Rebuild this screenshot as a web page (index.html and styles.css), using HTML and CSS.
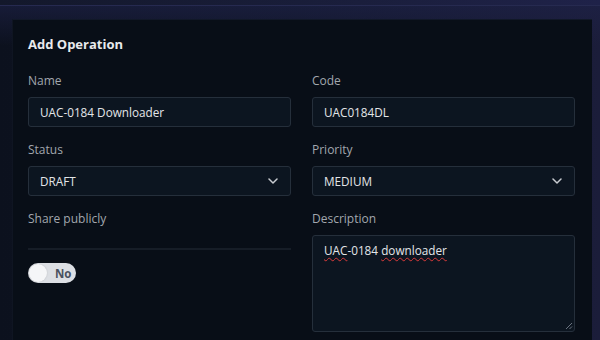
FILE: index.html
```html
<!DOCTYPE html>
<html>
<head>
<meta charset="utf-8">
<link rel="stylesheet" href="styles.css">
</head>
<body>
<div class="topbar"></div>
<div class="stage">
  <div class="panel">
    <h2 class="title">Add Operation</h2>
    <div class="grid">
      <div class="field">
        <div class="label">Name</div>
        <div class="input">UAC-0184 Downloader</div>
      </div>
      <div class="field">
        <div class="label">Code</div>
        <div class="input">UAC0184DL</div>
      </div>
      <div class="field">
        <div class="label">Status</div>
        <div class="input select">
          <span>DRAFT</span>
          <svg class="chev" width="10" height="6" viewBox="0 0 10 6"><path d="M1 1 L5 5 L9 1" fill="none" stroke="#c9ccd1" stroke-width="1.5" stroke-linecap="round" stroke-linejoin="round"/></svg>
        </div>
      </div>
      <div class="field">
        <div class="label">Priority</div>
        <div class="input select">
          <span>MEDIUM</span>
          <svg class="chev" width="10" height="6" viewBox="0 0 10 6"><path d="M1 1 L5 5 L9 1" fill="none" stroke="#c9ccd1" stroke-width="1.5" stroke-linecap="round" stroke-linejoin="round"/></svg>
        </div>
      </div>
      <div class="field">
        <div class="label">Share publicly</div>
        <div class="divider"></div>
        <div class="toggle"><span class="knob"></span><span class="toggle-text">No</span></div>
      </div>
      <div class="field">
        <div class="label">Description</div>
        <div class="textarea">
          <span class="spell">UAC</span>-0184 <span class="spell">downloader</span>
          <svg class="grip" width="8" height="8" viewBox="0 0 8 8"><path d="M7 1 L1 7 M7 4.5 L4.5 7" stroke="#6b7380" stroke-width="1" fill="none"/></svg>
        </div>
      </div>
    </div>
  </div>
</div>
</body>
</html>
```
FILE: styles.css
```css
* { box-sizing: border-box; }
html, body { margin: 0; padding: 0; }
body {
  width: 600px;
  height: 340px;
  overflow: hidden;
  font-family: "Open Sans", "DejaVu Sans", sans-serif;
  background: linear-gradient(90deg, #0b101c 0%, #10152a 50%, #1c1e3c 100%);
}
.topbar {
  height: 6px;
  background: linear-gradient(90deg, #13182b 0%, #1a1e3c 60%, #1f2249 100%);
  border-bottom: 1px solid #262a50;
}
.stage {
  height: 334px;
  padding: 13px 8px 0 12px;
  background: linear-gradient(180deg, rgba(30,34,72,0.6) 0px, rgba(30,34,72,0) 40px),
              linear-gradient(90deg, #0c111e 0%, #111629 50%, #1b1d3a 100%);
}
.panel {
  height: 100%;
  background: #080e17;
  border-top: 1px solid #111828;
  border-left: 1px solid #0f1522;
  padding: 15px 17px 0 15px;
}
.title {
  margin: 0 0 20px 0;
  font-size: 13px;
  line-height: 18px;
  font-weight: 700;
  color: #e8eaed;
}
.grid {
  display: grid;
  grid-template-columns: 263px 263px;
  column-gap: 21px;
  row-gap: 15px;
}
.field { display: flex; flex-direction: column; }
.label {
  font-size: 12px;
  line-height: 16px;
  color: #a2a7ae;
  margin-bottom: 8px;
}
.input {
  height: 30px;
  border: 1px solid #252f3b;
  border-radius: 3px;
  background: #0c1520;
  color: #e3e5e8;
  font-size: 11.75px;
  padding: 0 11px;
  display: flex;
  align-items: center;
}
.select { justify-content: space-between; padding-right: 12px; }
.chev { display: block; }
.divider {
  height: 2px;
  background: #161d27;
  margin-top: 13px;
}
.toggle {
  margin-top: 13px;
  width: 48px;
  height: 20px;
  border-radius: 10px;
  background: #dcdfe4;
  display: flex;
  align-items: center;
  padding: 0 1px;
  gap: 8px;
}
.knob {
  width: 18px;
  height: 18px;
  border-radius: 50%;
  background: #f5f6f8;
  box-shadow: 0 0 2px rgba(0,0,0,0.15);
}
.toggle-text {
  font-size: 11.5px;
  font-weight: 700;
  color: #4a5260;
}
.textarea {
  position: relative;
  height: 97px;
  border: 1px solid #252f3b;
  border-radius: 3px;
  background: #0c1520;
  color: #e3e5e8;
  font-size: 11.75px;
  line-height: 16px;
  padding: 6px 11px;
}
.spell {
  text-decoration: underline wavy #d93a3a;
  text-decoration-thickness: 1px;
  text-underline-offset: 2px;
}
.grip {
  position: absolute;
  right: 1px;
  bottom: 1px;
}
```
